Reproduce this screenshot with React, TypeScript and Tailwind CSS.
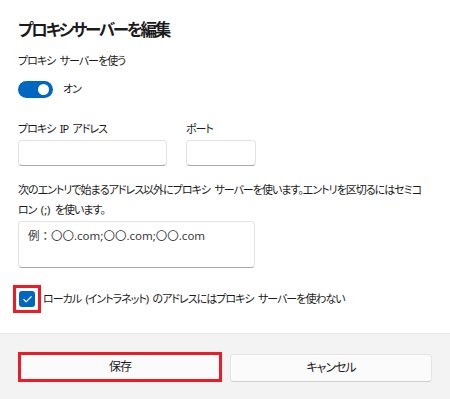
import { Check } from 'lucide-react';

const font = `font-['Noto_Sans','Noto_Sans_CJK_JP',sans-serif] [font-feature-settings:"palt"]`;
const body = 'text-[11px] tracking-[-1px] [word-spacing:2.5px] leading-[18px]';

function TextBox({ className }: { className: string }) {
  return (
    <div
      className={`rounded-[4px] border border-[#e3e3e3] border-b-[#a8a8a8] bg-white ${className}`}
    />
  );
}

export default function App() {
  return (
    <div className={`w-[450px] h-[399px] bg-white flex flex-col text-[#1b1b1b] ${font}`}>
      <div className="flex-1 pl-[18px] pt-[17px]">
        <h1 className="text-[16.5px] tracking-[-2.2px] leading-[26px] font-semibold">プロキシサーバーを編集</h1>

        <p className={`mt-[9px] ${body}`}>プロキシ サーバーを使う</p>

        <div className="mt-[10px] flex items-center gap-[10px]">
          <div className="w-[35px] h-[17px] rounded-full bg-[#0067c0] flex items-center justify-end pr-[4px]">
            <div className="w-[11px] h-[11px] rounded-full bg-white" />
          </div>
          <span className={body}>オン</span>
        </div>

        <div className="mt-[22px] flex gap-[19px]">
          <div>
            <div className={body}>プロキシ IP アドレス</div>
            <TextBox className="mt-[2px] w-[149px] h-[26px]" />
          </div>
          <div>
            <div className={body}>ポート</div>
            <TextBox className="mt-[2px] w-[70px] h-[26px]" />
          </div>
        </div>

        <p className="mt-[14px] text-[11px] tracking-[-1px] [word-spacing:2.5px] leading-[20px] whitespace-nowrap">
          次のエントリで始まるアドレス以外にプロキシ サーバーを使います。エントリを区切るにはセミコ
          <br />
          ロン <span className="tracking-normal">(;)</span> を使います。
        </p>

        <div className="mt-[1px] w-[237px] h-[47px] rounded-[4px] border border-[#e3e3e3] border-b-[#a8a8a8] bg-white px-[9px] pt-[5px] text-[11.5px] leading-[18px] text-[#3a3a3a] [font-feature-settings:normal]">
          例：〇〇.com;〇〇.com;〇〇.com
        </div>

        <div className="mt-[17px] -ml-[5px] flex items-center gap-[2px]">
          <div className="w-[28px] h-[28px] border-[3px] border-[#ed1c24] flex items-center justify-center">
            <div className="w-[16px] h-[16px] rounded-[3px] bg-[#0067c0] flex items-center justify-center">
              <Check className="w-[11px] h-[11px] text-white" strokeWidth={2.5} />
            </div>
          </div>
          <span className={body}>ローカル (イントラネット) のアドレスにはプロキシ サーバーを使わない</span>
        </div>
      </div>

      <div className="h-[66px] bg-[#f3f3f3] border-t border-[#e5e5e5] px-[18px] pt-[18px] flex gap-[8px]">
        <button className="w-[204px] h-[30px] border-[3px] border-[#ed1c24] bg-[#fbfbfb] text-[12px] tracking-[-1px]">
          保存
        </button>
        <button className="mt-[2px] w-[202px] h-[28px] rounded-[4px] border border-[#e5e5e5] border-b-[#cfcfcf] bg-[#fbfbfb] text-[12px] tracking-[-1px]">
          キャンセル
        </button>
      </div>
    </div>
  );
}
